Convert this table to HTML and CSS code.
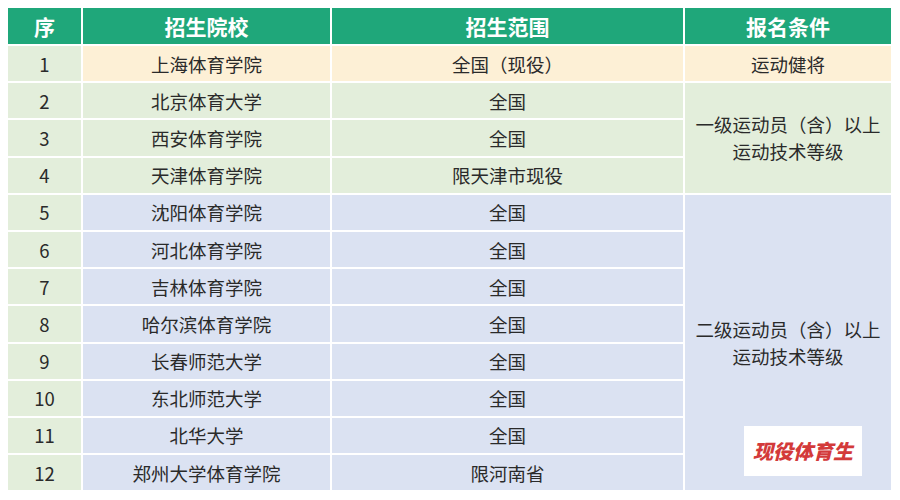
FILE: index.html
```html
<!DOCTYPE html>
<html lang="zh-CN">
<head>
<meta charset="utf-8">
<title>招生院校</title>
<link rel="stylesheet" href="styles.css">
</head>
<body>
<div class="wrap">
  <table class="tbl">
    <colgroup>
      <col class="c1"><col class="c2"><col class="c3"><col class="c4">
    </colgroup>
    <thead>
      <tr><th>序</th><th>招生院校</th><th>招生范围</th><th>报名条件</th></tr>
    </thead>
    <tbody>
      <tr class="peach"><td class="seq">1</td><td>上海体育学院</td><td>全国（现役）</td><td>运动健将</td></tr>
      <tr class="green"><td class="seq">2</td><td>北京体育大学</td><td>全国</td><td rowspan="3" class="cond">一级运动员（含）以上<br>运动技术等级</td></tr>
      <tr class="green"><td class="seq">3</td><td>西安体育学院</td><td>全国</td></tr>
      <tr class="green"><td class="seq">4</td><td>天津体育学院</td><td>限天津市现役</td></tr>
      <tr class="lav"><td class="seq">5</td><td>沈阳体育学院</td><td>全国</td><td rowspan="8" class="cond">二级运动员（含）以上<br>运动技术等级</td></tr>
      <tr class="lav"><td class="seq">6</td><td>河北体育学院</td><td>全国</td></tr>
      <tr class="lav"><td class="seq">7</td><td>吉林体育学院</td><td>全国</td></tr>
      <tr class="lav"><td class="seq">8</td><td>哈尔滨体育学院</td><td>全国</td></tr>
      <tr class="lav"><td class="seq">9</td><td>长春师范大学</td><td>全国</td></tr>
      <tr class="lav"><td class="seq">10</td><td>东北师范大学</td><td>全国</td></tr>
      <tr class="lav"><td class="seq">11</td><td>北华大学</td><td>全国</td></tr>
      <tr class="lav"><td class="seq">12</td><td>郑州大学体育学院</td><td>限河南省</td></tr>
    </tbody>
  </table>
  <div class="mark">现役体育生</div>
</div>
</body>
</html>
```
FILE: styles.css
```css
html, body {
  margin: 0;
  padding: 0;
  background: #ffffff;
}
body {
  font-family: "Noto Sans CJK SC", "Noto Sans", sans-serif;
  color: #2a2a2a;
}
.wrap {
  position: relative;
  width: 900px;
  height: 500px;
  padding: 6px 0 0 6px;
  box-sizing: border-box;
}
.tbl {
  border-collapse: separate;
  border-spacing: 2px;
  table-layout: fixed;
  width: 887px;
}
.c1 { width: 73px; }
.c2 { width: 247px; }
.c3 { width: 351px; }
.c4 { width: 206px; }
.tbl th {
  background: #1fa77a;
  color: #ffffff;
  font-weight: 700;
  font-size: 21px;
  height: 36px;
  padding: 0;
  text-align: center;
  vertical-align: middle;
  line-height: 36px;
}
.tbl td {
  height: 35.2px;
  padding: 0;
  text-align: center;
  vertical-align: middle;
  font-size: 18.5px;
  line-height: 22px;
}
.peach td { background: #fdf0d6; }
.green td { background: #e3eedb; }
.lav td { background: #dbe2f2; }
.tbl td.seq { background: #e3eedb; }
.tbl td.cond { line-height: 27px; }
.mark {
  position: absolute;
  left: 744px;
  top: 426px;
  width: 118px;
  height: 50px;
  background: #ffffff;
  color: #d33a3a;
  font-weight: 900;
  font-style: italic;
  font-size: 20px;
  line-height: 50px;
  text-align: center;
}
```
